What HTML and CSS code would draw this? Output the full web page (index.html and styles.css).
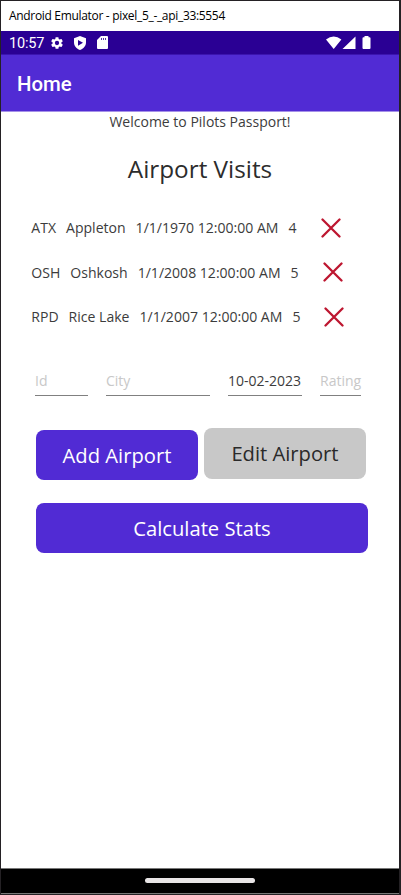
FILE: index.html
```html
<!DOCTYPE html>
<html lang="en">
<head>
<meta charset="utf-8">
<title>Pilots Passport</title>
<link rel="stylesheet" href="styles.css">
</head>
<body>
<div class="window">
  <div class="titlebar"><span>Android Emulator - pixel_5_-_api_33:5554</span></div>
  <div class="status">
    <span class="clock">10:57</span>
    <svg class="gear" width="14" height="14" viewBox="0 0 24 24"><path fill="#fff" fill-rule="evenodd" d="M19.4 13a7.800 7.800 0 0 0 0-2l2.200-1.700a.5.5 0 0 0 .1-.6l-2-3.500a.5.5 0 0 0-.6-.2l-2.500 1a7.700 7.700 0 0 0-1.700-1L14.500 2.400a.5.5 0 0 0-.5-.4h-4a.5.5 0 0 0-.5.400L9.100 5a7.700 7.700 0 0 0-1.700 1l-2.500-1a.5.5 0 0 0-.6.2l-2 3.500a.5.5 0 0 0 .1.600L4.600 11a7.800 7.800 0 0 0 0 2l-2.200 1.700a.5.5 0 0 0-.1.600l2 3.500c.1.200.4.300.6.200l2.500-1a7.700 7.700 0 0 0 1.700 1l.4 2.600c0 .2.200.4.500.4h4c.3 0 .5-.2.5-.4l.4-2.600a7.700 7.700 0 0 0 1.700-1l2.500 1c.2.100.5 0 .6-.2l2-3.500a.5.5 0 0 0-.1-.6zM12 15.700a3.700 3.700 0 1 1 0-7.400 3.700 3.700 0 0 1 0 7.400z"/></svg>
    <svg class="shield" width="12" height="14" viewBox="0 0 12 14"><path fill="#fff" fill-rule="evenodd" d="M6 0 12 2.200V6.500C12 10 9.500 12.700 6 14 2.500 12.700 0 10 0 6.500V2.200zM4 3.900V9.700L9 6.800z"/></svg>
    <svg class="sd" width="11" height="13" viewBox="0 0 11 13"><path fill="#fff" d="M4 0H10Q11 0 11 1V12Q11 13 10 13H1Q0 13 0 12V4z"/><path stroke="#2a0094" stroke-width=".8" d="M4.500 2V4M6.500 2V4M8.500 2V4"/></svg>
    <svg class="signals" width="46" height="14" viewBox="0 0 46 14"><path fill="#fff" d="M0 3.500Q7.700-2.500 15.400 3.500L7.700 13zM16.500 13 29.500 .5V13zM38.500 0H42.500V1.300H43.500Q44.500 1.300 44.500 2.300V12Q44.500 13 43.500 13H37.500Q36.500 13 36.500 12V2.300Q36.500 1.300 37.500 1.300H38.500z"/></svg>
  </div>
  <header class="appbar">Home</header>
  <main>
    <p class="welcome">Welcome to Pilots Passport!</p>
    <h1>Airport Visits</h1>
    <ul class="visits">
      <li><span>ATX</span><span>Appleton</span><span>1/1/1970 12:00:00 AM</span><span>4</span><svg width="20" height="20" viewBox="0 0 20 20"><path d="M1.500 1.500 18.500 18.500M18.500 1.500 1.500 18.500"/></svg></li>
      <li><span>OSH</span><span>Oshkosh</span><span>1/1/2008 12:00:00 AM</span><span>5</span><svg width="20" height="20" viewBox="0 0 20 20"><path d="M1.500 1.500 18.500 18.500M18.500 1.500 1.500 18.500"/></svg></li>
      <li><span>RPD</span><span>Rice Lake</span><span>1/1/2007 12:00:00 AM</span><span>5</span><svg width="20" height="20" viewBox="0 0 20 20"><path d="M1.500 1.500 18.500 18.500M18.500 1.500 1.500 18.500"/></svg></li>
    </ul>
    <div class="fields">
      <div class="field">Id</div>
      <div class="field">City</div>
      <div class="field filled">10-02-2023</div>
      <div class="field">Rating</div>
    </div>
    <div class="actions">
      <button class="btn">Add Airport</button>
      <button class="btn edit">Edit Airport</button>
    </div>
    <button class="btn stats">Calculate Stats</button>
  </main>
  <nav class="navbar"><div class="handle"></div></nav>
</div>
</body>
</html>
```
FILE: styles.css
```css
* { box-sizing: border-box; }
body { margin: 0; background: #fff; font-family: "Open Sans", sans-serif; color: #3c3c3c; }
.window {
  width: 401px; height: 895px;
  display: flex; flex-direction: column;
  border: 1px solid #242124; border-right-width: 2px;
  background: #fff; overflow: hidden;
}
.titlebar {
  height: 30px; flex: none; padding-left: 8px;
  font-size: 12px; line-height: 29px; letter-spacing: -0.32px;
  color: #000; white-space: nowrap;
}
.status {
  height: 24px; flex: none; padding-left: 8px;
  display: flex; align-items: center;
  background: #2a0094; border-bottom: 1px solid #3c14b0;
}
.clock { width: 41px; color: #fff; font: 14.5px/22px Roboto, sans-serif; padding-top: 2px; letter-spacing: -0.2px; }
.shield { margin-left: 10px; }
.sd { margin-left: 11px; }
.signals { margin-left: auto; margin-right: 27px; }
.appbar {
  height: 57px; flex: none; padding-left: 16px;
  background: #512bd4; border-bottom: 1px solid #a591e8;
  color: #fff; font: 500 20.4px/59px Roboto, sans-serif;
}
main { flex: 1; }
.welcome { margin: 0; height: 20px; font-size: 14px; line-height: 20px; text-align: center; }
h1 { margin: 20px 0 0; font-size: 24.3px; line-height: 34px; font-weight: 400; text-align: center; color: #2c2c2c; }
.visits { list-style: none; margin: 19.500px 0 0; padding: 0 0 0 30.300px; }
.visits li { display: flex; align-items: center; gap: 10px; height: 44.500px; font-size: 14.05px; white-space: nowrap; }
.visits svg { margin-left: 14px; fill: none; stroke: #bd1630; stroke-width: 2.300; stroke-linecap: round; }
.fields {
  display: grid; grid-template-columns: 53px 104px 74px 41px; column-gap: 18px;
  margin: 29px 0 0 34px;
}
.field { height: 28px; border-bottom: 1px solid #808080; font-size: 14px; line-height: 26px; color: #c8c8c8; white-space: nowrap; }
.filled { color: #3c3c3c; }
.actions { display: flex; gap: 6px; margin: 32px 0 0 35px; }
.btn {
  width: 162px; height: 50.500px; padding: 0; border: 0; border-radius: 8px;
  background: #512bd4; color: #fff;
  font: 20.2px/50px "Open Sans", sans-serif;
}
.actions .btn { margin-top: 1.500px; }
.actions .edit { margin-top: 0; background: #c8c8c8; color: #2a2a2a; }
.stats { display: block; width: 332px; margin: 22.500px 0 0 35px; }
.navbar {
  height: 26px; flex: none; display: flex; justify-content: center; padding-top: 9px;
  background: #000; border-top: 1px solid #777; border-bottom: 1px solid #777;
}
.handle { width: 110px; height: 5px; border-radius: 3px; background: #e8e5e6; }
```
